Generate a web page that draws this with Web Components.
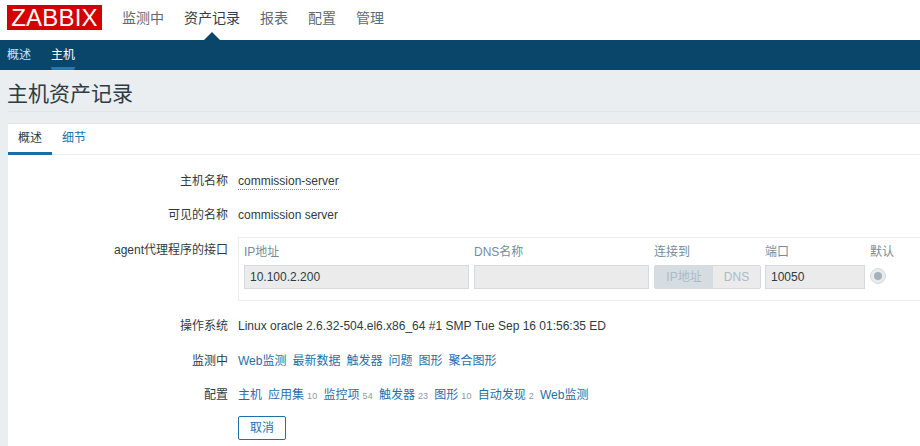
<!DOCTYPE html>
<html lang="zh">
<head>
<meta charset="utf-8">
<title>主机资产记录</title>
<style>
    html, body {
        margin: 0;
        height: 446px;
        overflow: hidden;
        background: #ebeef0;
        color: #2f3b42;
        font: 12px "Liberation Sans", "Noto Sans CJK SC", sans-serif;
    }
</style>
</head>
<body>
<zbx-topnav></zbx-topnav>
<zbx-subnav></zbx-subnav>
<zbx-title>主机资产记录</zbx-title>
<zbx-card>
    <zbx-row label="主机名称" gap="14"><span style="border-bottom:1px dotted #7d8c96;padding-bottom:1px">commission-server</span></zbx-row>
    <zbx-row label="可见的名称" gap="12">commission server</zbx-row>
    <zbx-row label="agent代理程序的接口" gap="15" top><zbx-interface></zbx-interface></zbx-row>
    <zbx-row label="操作系统" gap="15">Linux oracle 2.6.32-504.el6.x86_64 #1 SMP Tue Sep 16 01:56:35 ED</zbx-row>
    <zbx-row label="监测中" gap="14">
        <zbx-links items="Web监测,最新数据,触发器,问题,图形,聚合图形"></zbx-links>
    </zbx-row>
    <zbx-row label="配置" gap="10">
        <zbx-links items="主机,应用集:10,监控项:54,触发器:23,图形:10,自动发现:2,Web监测"></zbx-links>
    </zbx-row>
    <zbx-row gap="0"><zbx-button>取消</zbx-button></zbx-row>
</zbx-card>
<script>
class ZbxTopnav extends HTMLElement {
    constructor() {
        super();
        this.shadow = this.attachShadow({mode: 'open'});
    }
    connectedCallback() {
        let items = ['监测中', '资产记录', '报表', '配置', '管理'];
        this.shadow.innerHTML = `
        <style>
            :host {
                display: flex;
                align-items: flex-start;
                height: 40px;
                background: #fff;
                box-sizing: border-box;
                padding: 5px 0 0 7px;
            }
            .logo {
                width: 95px;
                height: 25px;
                background: #d40000;
                color: #fff;
                font-size: 24px;
                line-height: 25px;
                text-align: center;
                letter-spacing: 0.2px;
                white-space: nowrap;
            }
            nav {
                display: flex;
                gap: 20px;
                margin-left: 20px;
                font-size: 14px;
                line-height: 26px;
                color: #5d6b74;
            }
            nav span { position: relative; height: 35px; display: block; }
            nav .on { color: #2f3e47; }
            nav .on::after {
                content: '';
                position: absolute;
                left: 50%;
                bottom: 0;
                margin-left: -8px;
                border: 8px solid transparent;
                border-top: 0;
                border-bottom-color: #0a466a;
            }
        </style>
        <div class="logo">ZABBIX</div>
        <nav>${items.map((t, i) => `<span class="${i == 1 ? 'on' : ''}">${t}</span>`).join('')}</nav>`;
    }
}
customElements.define('zbx-topnav', ZbxTopnav);

class ZbxSubnav extends HTMLElement {
    constructor() {
        super();
        this.shadow = this.attachShadow({mode: 'open'});
    }
    connectedCallback() {
        this.shadow.innerHTML = `
        <style>
            :host {
                display: flex;
                gap: 20px;
                height: 30px;
                background: #0a466a;
                color: #d5e3ec;
                padding-left: 7px;
                line-height: 30px;
            }
            span { height: 30px; box-sizing: border-box; }
            .on { color: #fff; border-bottom: 3px solid #1f7ab8; border-radius: 0 0 2px 2px; }
        </style>
        <span>概述</span><span class="on">主机</span>`;
    }
}
customElements.define('zbx-subnav', ZbxSubnav);

class ZbxTitle extends HTMLElement {
    constructor() {
        super();
        this.shadow = this.attachShadow({mode: 'open'});
    }
    connectedCallback() {
        this.shadow.innerHTML = `
        <style>
            :host {
                display: block;
                margin: 0 0 11px 8px;
                height: 41px;
                border-bottom: 1px solid #dfe4e7;
                font-size: 21px;
                line-height: 48px;
                text-indent: -1px;
            }
        </style>
        <slot></slot>`;
    }
}
customElements.define('zbx-title', ZbxTitle);

class ZbxCard extends HTMLElement {
    constructor() {
        super();
        this.shadow = this.attachShadow({mode: 'open'});
    }
    connectedCallback() {
        this.shadow.innerHTML = `
        <style>
            :host {
                display: block;
                margin-left: 8px;
                height: 332px;
                background: #fff;
                border-top: 1px solid #dfe4e7;
                box-sizing: border-box;
            }
            .tabs {
                display: flex;
                height: 31px;
                box-sizing: border-box;
                border-bottom: 1px solid #ebeef0;
                line-height: 29px;
            }
            .tabs span { padding: 0 10px; height: 31px; box-sizing: border-box; color: #1f6fa8; }
            .tabs .on { color: #2f3b42; border-bottom: 3px solid #1c6ca5; width: 44px; padding: 0 0 0 10px; }
            .form { padding-top: 16px; }
        </style>
        <div class="tabs"><span class="on">概述</span><span>细节</span></div>
        <div class="form"><slot></slot></div>`;
    }
}
customElements.define('zbx-card', ZbxCard);

class ZbxRow extends HTMLElement {
    constructor() {
        super();
        this.shadow = this.attachShadow({mode: 'open'});
    }
    connectedCallback() {
        this.shadow.innerHTML = `
        <style>
            :host {
                display: grid;
                grid-template-columns: 220px 1fr;
                column-gap: 10px;
                line-height: 20px;
                white-space: nowrap;
                margin-bottom: ${this.getAttribute('gap')}px;
            }
            .label { text-align: right; }
            .top { padding-top: 3px; }
        </style>
        <div class="label ${this.hasAttribute('top') ? 'top' : ''}">${this.getAttribute('label') || ''}</div>
        <div><slot></slot></div>`;
    }
}
customElements.define('zbx-row', ZbxRow);

class ZbxInterface extends HTMLElement {
    constructor() {
        super();
        this.shadow = this.attachShadow({mode: 'open'});
    }
    connectedCallback() {
        this.shadow.innerHTML = `
        <style>
            :host {
                display: block;
                box-sizing: border-box;
                width: 700px;
                height: 64px;
                border: 1px solid #ebeef0;
                padding: 5px 5px 0 5px;
                line-height: 18px;
            }
            .grid {
                display: grid;
                grid-template-columns: 225px 175px 107px 100px 30px;
                column-gap: 5px;
                color: #768d99;
            }
            .grid > div:nth-child(n+6) { margin-top: 4px; }
            .grid > .shift { margin-left: -1px; margin-right: 1px; }
            .in {
                height: 24px;
                box-sizing: border-box;
                background: #ebebeb;
                border: 1px solid #d5dade;
                padding-left: 5px;
                line-height: 22px;
                color: #2f3b42;
            }
            .seg {
                display: flex;
                height: 24px;
                box-sizing: border-box;
                border: 1px solid #d5dade;
                border-radius: 2px;
                line-height: 22px;
                text-align: center;
                color: #acbbc4;
            }
            .seg span:first-child { width: 58px; background: #d5dde2; }
            .seg span:last-child { flex: 1; background: #ebebeb; }
            .radio {
                display: flex;
                width: 16px;
                height: 16px;
                margin-top: 3px;
                border-radius: 50%;
                background: #ebebeb;
                border: 1px solid #d5dade;
                box-sizing: border-box;
                align-items: center;
                justify-content: center;
            }
            .radio i { width: 8px; height: 8px; border-radius: 50%; background: #a3b3bd; }
        </style>
        <div class="grid">
            <div>IP地址</div><div>DNS名称</div><div>连接到</div><div class="shift">端口</div><div class="shift">默认</div>
            <div class="in">10.100.2.200</div>
            <div class="in"></div>
            <div class="seg"><span>IP地址</span><span>DNS</span></div>
            <div class="in shift">10050</div>
            <div class="shift"><div class="radio"><i></i></div></div>
        </div>`;
    }
}
customElements.define('zbx-interface', ZbxInterface);

class ZbxLinks extends HTMLElement {
    constructor() {
        super();
        this.shadow = this.attachShadow({mode: 'open'});
    }
    connectedCallback() {
        let items = this.getAttribute('items').split(',').map(s => s.split(':'));
        this.shadow.innerHTML = `
        <style>
            :host { display: flex; gap: 6px; color: #1f6fa8; }
            small { font-size: 9px; color: #8a9aa4; margin-left: 3px; letter-spacing: 0.2px; }
        </style>
        ${items.map(([t, n]) => `<span>${t}${n ? `<small>${n}</small>` : ''}</span>`).join('')}`;
    }
}
customElements.define('zbx-links', ZbxLinks);

class ZbxButton extends HTMLElement {
    constructor() {
        super();
        this.shadow = this.attachShadow({mode: 'open'});
    }
    connectedCallback() {
        this.shadow.innerHTML = `
        <style>
            :host {
                display: block;
                box-sizing: border-box;
                width: 48px;
                height: 24px;
                border: 1px solid #1f6fa8;
                border-radius: 2px;
                color: #1f6fa8;
                text-align: center;
                line-height: 22px;
            }
        </style>
        <slot></slot>`;
    }
}
customElements.define('zbx-button', ZbxButton);
</script>
</body>
</html>
